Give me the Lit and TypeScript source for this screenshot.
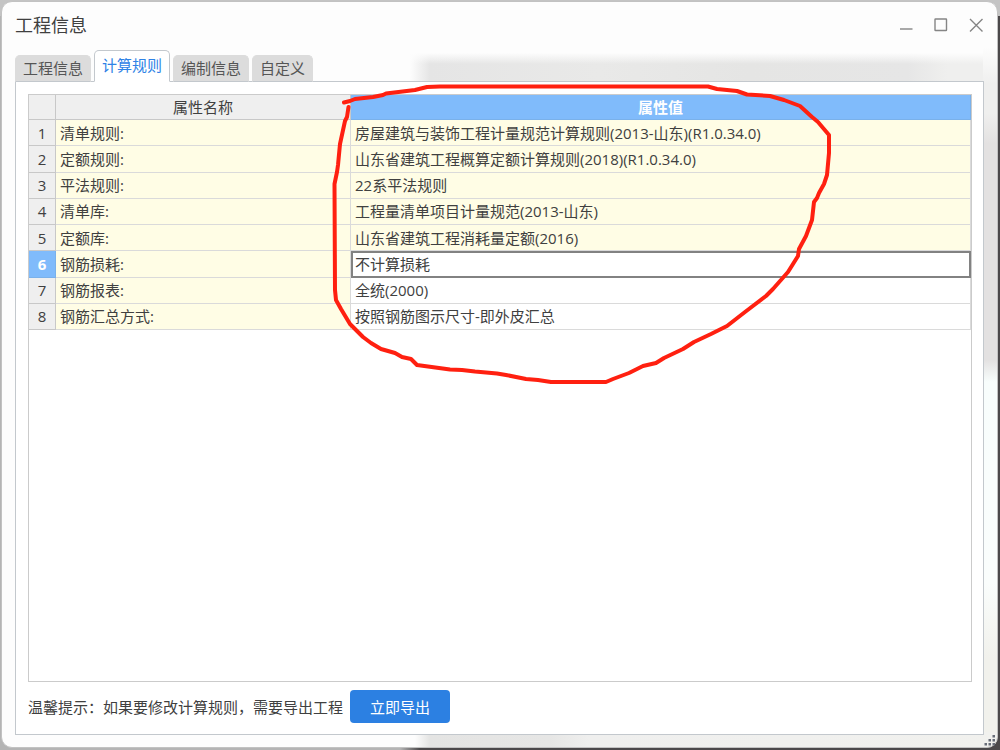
import { LitElement, html, css } from "lit";
import { customElement, state } from "lit/decorators.js";
import { classMap } from "lit/directives/class-map.js";

interface Rule {
  name: string;
  value: string;
  editable?: boolean;
}

const TABS = ["工程信息", "计算规则", "编制信息", "自定义"];

const RULES: Rule[] = [
  { name: "清单规则:", value: "房屋建筑与装饰工程计量规范计算规则(2013-山东)(R1.0.34.0)" },
  { name: "定额规则:", value: "山东省建筑工程概算定额计算规则(2018)(R1.0.34.0)" },
  { name: "平法规则:", value: "22系平法规则" },
  { name: "清单库:", value: "工程量清单项目计量规范(2013-山东)" },
  { name: "定额库:", value: "山东省建筑工程消耗量定额(2016)" },
  { name: "钢筋损耗:", value: "不计算损耗", editable: true },
  { name: "钢筋报表:", value: "全统(2000)", editable: true },
  { name: "钢筋汇总方式:", value: "按照钢筋图示尺寸-即外皮汇总", editable: true },
];

@customElement("rule-table")
class RuleTable extends LitElement {
  static styles = css`
    :host {
      display: block;
    }
    .grid {
      width: 100%;
      height: 235px;
      table-layout: fixed;
      border-collapse: separate;
      border-spacing: 0;
    }
    .col-index {
      width: 27px;
    }
    .col-name {
      width: 295px;
    }
    .head-row {
      height: 25px;
    }
    .row {
      height: 26px;
    }
    th,
    td {
      box-sizing: border-box;
      padding: 0 4px;
      font-weight: 400;
      text-align: left;
      line-height: 20px;
      white-space: nowrap;
      border-right: 1px solid #dadada;
      border-bottom: 1px solid #dadada;
    }
    .head,
    .index {
      padding: 0;
      text-align: center;
      background: #efefef;
      border-color: #c8c8c8;
    }
    .head.current,
    .index.current {
      font-weight: 700;
      color: #fff;
      background: #80bbfb;
      border-color: #7ab1ea;
    }
    .name,
    .value {
      background: #fffde5;
    }
    .value.editable {
      background: #fff;
    }
    .value.current {
      padding: 0;
      border: 2px solid #828282;
    }
    .field {
      display: block;
      box-sizing: border-box;
      width: 100%;
      height: 20px;
      padding: 0 2px;
      border: 0;
      outline: 0;
      background: transparent;
      color: inherit;
      font: inherit;
    }
  `;

  @state() private current = 5;

  render() {
    return html`
      <table class="grid">
        <colgroup>
          <col class="col-index" />
          <col class="col-name" />
          <col />
        </colgroup>
        <thead>
          <tr class="head-row">
            <td class="head"></td>
            <th class="head" scope="col">属性名称</th>
            <th class="head current" scope="col">属性值</th>
          </tr>
        </thead>
        <tbody>
          ${RULES.map((rule, i) => {
            const current = i === this.current;
            return html`
              <tr class="row">
                <td class=${classMap({ index: true, current })}>${i + 1}</td>
                <th class="name" scope="row" id="rule-${i}">${rule.name}</th>
                <td class=${classMap({ value: true, editable: !!rule.editable, current })}
                  @click=${() => rule.editable && (this.current = i)}>
                  ${current
                    ? html`<input class="field" type="text" aria-labelledby="rule-${i}" .value=${rule.value} />`
                    : rule.value}
                </td>
              </tr>
            `;
          })}
        </tbody>
      </table>
    `;
  }
}

@customElement("app-root")
class AppRoot extends LitElement {
  static styles = css`
    :host {
      display: block;
      box-sizing: border-box;
      position: relative;
      height: 100vh;
      padding: 1px 2px 2px 1px;
      overflow: hidden;
      background:
        linear-gradient(#c4c4c4, #c4c4c4) top / 100% 16px no-repeat,
        linear-gradient(90deg, #b4b4b4 0 40%, #4b484a 42% 100%);
      color: #404040;
      font: 15px/20px "Open Sans", "Noto Sans CJK SC", sans-serif;
    }
    .window {
      display: flex;
      flex-direction: column;
      box-sizing: border-box;
      height: 100%;
      padding: 0 13px 12px 13px;
      border: 1px solid #c2c2c2;
      border-radius: 11px;
      background:
        linear-gradient(90deg, transparent 41.5%, #e4e4e3 43%, #e6e6e5 55%, #efefee 59%, #f1f1ee) bottom / 100% 15px no-repeat,
        linear-gradient(#fdfdfd 6%, #efefee 11%, #efefee 15%, #e3e1e1 19%, #e3e1e1 48%, #f8fdfc 51%, #fafdfc 78%, #f1f1ec 88%) right / 14px 100% no-repeat,
        linear-gradient(#fdfdfd 82%, #fdfdfd00) top / 100% 62px no-repeat,
        linear-gradient(90deg, transparent 41%, #e5e5e5 43%, #e9e9e8 60%, #e5e5e4 75%, #e6e6e6 91%, #efefee 95%) top / 100% 84px no-repeat,
        #fdfdfd;
    }
    .titlebar {
      display: flex;
      align-items: center;
      justify-content: space-between;
      box-sizing: border-box;
      height: 48px;
      padding-bottom: 3px;
      flex: none;
    }
    .title {
      margin: 0;
      font-size: 18px;
      line-height: 24px;
      font-weight: 400;
    }
    .controls {
      display: flex;
      gap: 19px;
    }
    .control {
      display: flex;
      padding: 0;
      border: 0;
      background: none;
    }
    .glyph {
      display: block;
      width: 16px;
      height: 16px;
      fill: none;
      stroke: #858585;
      stroke-width: 1.4;
    }
    .tabs {
      display: flex;
      align-items: flex-end;
      gap: 3px;
      flex: none;
      height: 32px;
      margin-bottom: -1px;
      z-index: 1;
    }
    .tab {
      box-sizing: border-box;
      height: 27px;
      padding: 0 7px 2px;
      border: 1px solid #dcdcdc;
      border-bottom-color: #c3c8cd;
      border-radius: 5px 5px 0 0;
      background: #dcdcdc;
      color: #555;
      font: inherit;
    }
    .tab.active {
      height: 32px;
      border-color: #c3c8cd;
      border-bottom-color: #fff;
      background: #fff;
      color: #2e82e6;
    }
    .panel {
      display: flex;
      flex-direction: column;
      flex: 1;
      min-height: 0;
      padding: 12px 11px 11px 12px;
      border: 1px solid #c3c8cd;
      background: #fff;
    }
    .sheet {
      flex: 1;
      min-height: 0;
      border: 1px solid #cbcbcb;
    }
    .footer {
      display: flex;
      align-items: center;
      gap: 7px;
      margin-top: 8px;
      flex: none;
    }
    .export {
      width: 100px;
      height: 33px;
      padding: 0;
      border: 0;
      border-radius: 4px;
      background: #2c80e2;
      color: #fff;
      font: inherit;
    }
    .mark {
      position: absolute;
      left: 0;
      top: 0;
      z-index: 2;
      width: 1000px;
      height: 750px;
      pointer-events: none;
      fill: none;
      stroke: #ff2010;
      stroke-width: 4;
      stroke-linejoin: round;
      stroke-linecap: round;
    }
    .grip {
      position: absolute;
      right: 4px;
      bottom: 4px;
      width: 12px;
      height: 12px;
      fill: #686d78;
    }
  `;

  @state() private tab = 1;

  render() {
    return html`
      <main class="window">
        <header class="titlebar">
          <h1 class="title">工程信息</h1>
          <div class="controls">
            <button class="control" aria-label="最小化">
              <svg class="glyph" viewBox="0 0 16 16"><path d="M2 12H14.500" /></svg>
            </button>
            <button class="control" aria-label="最大化">
              <svg class="glyph" viewBox="0 0 16 16"><rect x="2" y="2" width="11.500" height="11.500" rx="0.5" /></svg>
            </button>
            <button class="control" aria-label="关闭">
              <svg class="glyph" viewBox="0 0 16 16"><path d="M2 2L14.500 14.500M14.500 2L2 14.500" /></svg>
            </button>
          </div>
        </header>
        <div class="tabs" role="tablist">
          ${TABS.map(
            (label, i) => html`<button
              role="tab"
              aria-selected=${i === this.tab ? "true" : "false"}
              class=${classMap({ tab: true, active: i === this.tab })}
              @click=${() => (this.tab = i)}
            >${label}</button>`
          )}
        </div>
        <section class="panel" role="tabpanel">
          <div class="sheet"><rule-table></rule-table></div>
          <div class="footer">
            <span>温馨提示：如果要修改计算规则，需要导出工程</span>
            <button class="export">立即导出</button>
          </div>
        </section>
      </main>
      <svg class="grip" viewBox="0 0 12 12" aria-hidden="true">
        <path d="M8.500 1h2.500v2.500h-2.500zM4.500 5h2.500v2.500h-2.500zM8.500 5h2.500v2.500h-2.500zM.5 9h2.500v2.500h-2.500zM4.500 9h2.500v2.500h-2.500zM8.500 9h2.500v2.500h-2.500z" />
      </svg>
      <svg class="mark" viewBox="0 0 1000 750" aria-hidden="true">
        <path d="M344 102.500L350 101L355 99L373 97L383 95L386 93.500L415 90L427 87L440 86.500H708L717 89L737 91L747 94.500L770 96L784 100L800 106L812 117L818 122L829 135V153L827 175L824 184L819 193L817 198L814 202L812 220L806 236L799 249L798 256L788 272L773 289L766 296L745 312L727 326L711 334L694 342L683 349L664 358L656 363L643 366L629 373L613 379L606 382H551L538 380L526 379L506 375L497 373.500L475 371.500L462 370L450 369.500L417 365L411 359L402 357L395 353L381 349L371 343L363 337L357 331L350 324L341 309L336 300L335 290L334.500 184L337 172L338 165L340 144L345 121L347 117L348.500 107" />
      </svg>
    `;
  }
}
